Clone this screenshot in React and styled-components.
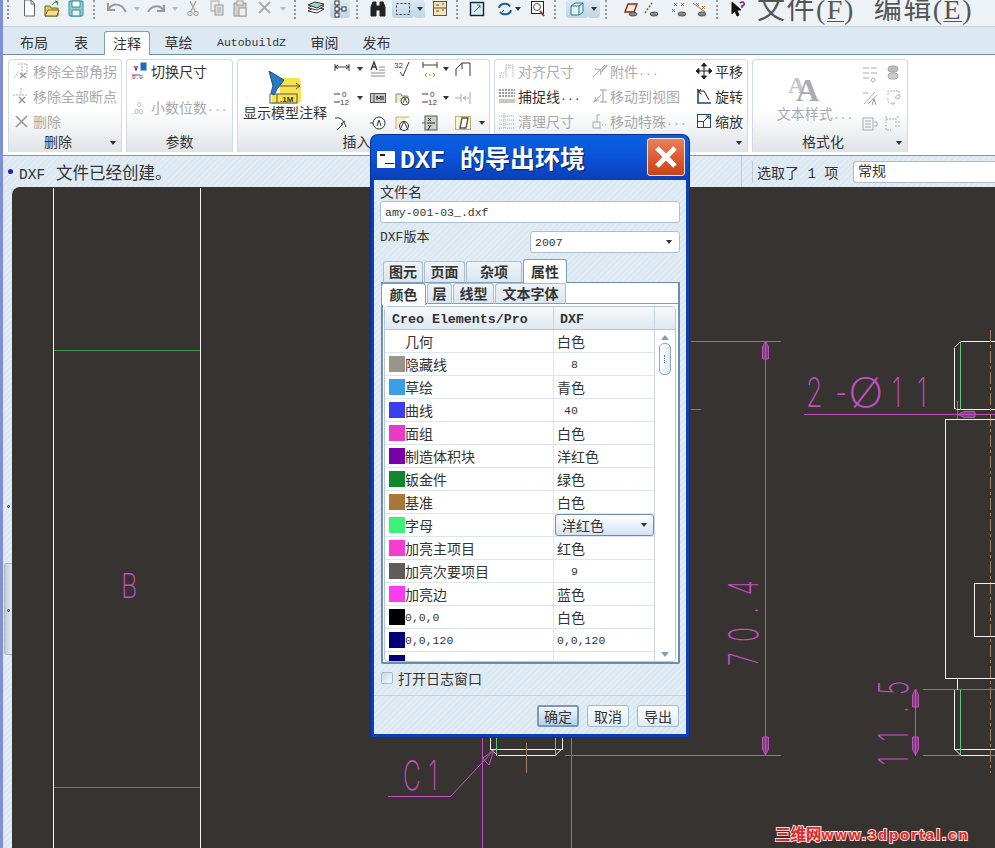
import React from 'react';
import styled, { createGlobalStyle } from 'styled-components';

const Global = createGlobalStyle`
  html, body { margin: 0; padding: 0; background: #363330; }
  * { box-sizing: border-box; }
`;

const stripes = `repeating-linear-gradient(135deg, #dbe8f2 0 2px, #e1ecf5 2px 4px)`;
const cjk = `"Liberation Mono", "Noto Sans CJK SC", monospace`;

const Page = styled.div`
  position: relative;
  width: 995px;
  height: 848px;
  overflow: hidden;
  display: flex;
  flex-direction: column;
  border-left: 3px solid #7f8fd8;
  font-family: ${cjk};
  font-size: 14px;
  color: #333;
`;

/* top toolbar */
const Toolbar = styled.div`
  height: 27px;
  flex: none;
  display: flex;
  align-items: flex-start;
  overflow: hidden;
  background: #edf2f6;
  border-bottom: 1px solid #c4d0da;
`;
const Slot = styled.div`
  width: ${p => p.$w}px;
  height: 18px;
  flex: none;
  display: flex;
  align-items: center;
  justify-content: center;
  ${p => p.$on && `background: linear-gradient(#dbe8f2, #bcd6ea); border-radius: 3px;`}
`;
const Grip = styled.div`
  width: 3px;
  height: 19px;
  border-left: 2px dotted #8c9aa6;
`;
const Menu = styled.div`
  margin-left: 9px;
  display: flex;
  gap: 19px;
  font-family: "Liberation Serif", "Noto Sans CJK SC", serif;
  font-size: 28px;
  line-height: 20px;
  letter-spacing: 1.5px;
  color: #555;
  white-space: nowrap;
  u { text-underline-offset: 2px; text-decoration-thickness: 1px; }
`;
const Arrow = styled.i`
  display: block;
  width: 0;
  height: 0;
  border: 3.5px solid transparent;
  border-top: 4px solid ${p => p.$c || '#333'};
  border-bottom: 0;
`;

/* tabs */
const TabStrip = styled.div`
  height: 28px;
  flex: none;
  display: flex;
  align-items: flex-end;
  background: #dce8f2;
  border-bottom: 1px solid #6d8ca6;
  padding-left: 7px;
`;
const MainTab = styled.div`
  width: ${p => p.$w}px;
  height: ${p => (p.$on ? 24 : 23)}px;
  margin-bottom: ${p => (p.$on ? -1 : 0)}px;
  padding-bottom: 1px;
  display: flex;
  align-items: center;
  justify-content: center;
  white-space: nowrap;
  font-size: ${p => (p.$latin ? 11.5 : 14)}px;
  ${p => p.$on && `background: #fff; border: 1px solid #7f9db5; border-bottom: 0; border-radius: 3px 3px 0 0;`}
`;

/* ribbon */
const Ribbon = styled.div`
  height: 100px;
  flex: none;
  display: flex;
  gap: 4px;
  padding: 4px 0 3px 5px;
  background: #fff;
`;
const Group = styled.div`
  width: ${p => p.$w}px;
  display: flex;
  flex-direction: column;
  border: 1px solid #d0dae2;
  border-bottom: 0;
  border-radius: 4px 4px 0 0;
  background: linear-gradient(#fff 55%, #dfe4e8);
`;
const GroupBody = styled.div`
  height: 75px;
  display: flex;
  flex: none;
`;
const Col = styled.div`
  width: ${p => p.$w ? `${p.$w}px` : 'auto'};
  display: flex;
  flex-direction: column;
`;
const GroupFoot = styled.div`
  position: relative;
  height: 17px;
  padding-right: ${p => p.$pr || 0}px;
  text-align: center;
  line-height: 17px;
  white-space: nowrap;
  & > i { position: absolute; right: 5px; top: 6px; }
`;
const Cmd = styled.div`
  height: 25px;
  padding-bottom: 3px;
  display: flex;
  align-items: center;
  white-space: nowrap;
  color: ${p => (p.$off ? '#aaa' : '#333')};
  margin-top: ${p => p.$mt || 0}px;
`;
const CmdIcon = styled.div`
  width: ${p => p.$w}px;
  flex: none;
  display: flex;
  justify-content: center;
`;
const Dots = styled.span`
  font-size: 11.5px;
`;
const BigCmd = styled.div`
  width: ${p => p.$w}px;
  padding-top: ${p => p.$pt}px;
  padding-left: ${p => p.$pl || 0}px;
  flex: none;
  display: flex;
  flex-direction: column;
  align-items: center;
  white-space: nowrap;
  line-height: 16px;
  color: ${p => (p.$off ? '#aaa' : '#333')};
`;
const BigText = styled.span`
  margin-top: ${p => p.$mt || 0}px;
`;
const IconGrid = styled.div`
  display: grid;
  grid-template-columns: ${p => p.$cols};
  grid-auto-rows: 25px;
  align-items: center;
  justify-items: center;
  & > .lift { margin-bottom: 8px; }
`;

/* status */
const Status = styled.div`
  height: 32px;
  flex: none;
  display: flex;
  align-items: center;
  background: ${stripes};
  border-top: 1px solid #7f9ab0;
  padding-left: 5px;
`;
const Bullet = styled.span`
  width: 5px;
  height: 5px;
  margin-right: 6px;
  border-radius: 50%;
  background: #1a22c0;
`;
const StatusMsg = styled.div`
  flex: 1;
  font-size: 16.5px;
  white-space: pre;
  span { font-size: 14.5px; margin-right: 11px; }
`;
const StatusRight = styled.div`
  width: 254px;
  flex: none;
  height: 100%;
  display: flex;
  align-items: center;
  border-left: 1px solid #bccbd8;
  padding-left: 15px;
  position: relative;
  &::before { content: ''; position: absolute; left: 10px; top: 5px; bottom: 4px; width: 1px; background: #bccbd8; }
  span { white-space: pre; width: 96px; flex: none; }
`;
const StatusField = styled.div`
  flex: 1;
  height: 22px;
  line-height: 20px;
  padding-left: 4px;
  background: #fff;
  border: 1px solid #a9bccb;
  border-right: 0;
  border-radius: 3px 0 0 3px;
`;

/* main */
const Work = styled.div`
  flex: 1;
  display: flex;
  min-height: 0;
  background: #dce8f2;
`;
const Rail = styled.div`
  width: 9px;
  flex: none;
  position: relative;
  background: ${stripes};
`;
const RailDot = styled.i`
  position: absolute;
  left: 4px;
  top: ${p => p.$y}px;
  width: 3px;
  height: 3px;
  border-radius: 50%;
  border: 1px solid #334;
`;
const RailHandle = styled.div`
  position: absolute;
  left: 1px;
  top: 376px;
  right: 0;
  height: 92px;
  border: 1px solid #a9b7c3;
  border-right: 0;
  border-radius: 3px 0 0 3px;
  background: linear-gradient(90deg, #c0ced9, #dfe9f1);
`;
const Canvas = styled.div`
  position: relative;
  flex: 1;
  background: #363330;
  border-radius: 8px 0 0 0;
  overflow: hidden;
`;
const Drawing = styled.svg`
  display: block;
  width: 983px;
  height: 661px;
  line { shape-rendering: crispEdges; }
`;
const Watermark = styled.div`
  position: absolute;
  left: 763px;
  bottom: 5px;
  font-family: "Liberation Sans", "Noto Sans CJK SC", sans-serif;
  font-weight: 700;
  font-size: 15.5px;
  line-height: 16px;
  white-space: nowrap;
  color: #e02828;
  -webkit-text-stroke: 2px #f6d8d8;
  paint-order: stroke fill;
  span { font-size: 15px; letter-spacing: 1.9px; }
`;

/* dialog */
const Dialog = styled.div`
  position: absolute;
  left: 368px;
  top: 135px;
  width: 318px;
  height: 602px;
  display: flex;
  flex-direction: column;
  background: #0b3fb8;
  border: 3px solid #0b3fb8;
  border-top: 0;
  border-radius: 7px 7px 0 0;
  box-shadow: 0 0 0 1px #0a2f90;
`;
const TitleBar = styled.div`
  height: 45px;
  flex: none;
  display: flex;
  align-items: center;
  gap: 5px;
  padding: 0 3px 1px 3px;
  margin: 0 -3px;
  border-radius: 7px 7px 0 0;
  background: linear-gradient(#0a60e0, #0b52d8 50%, #0a3fb8);
  color: #fff;
  font-size: 25px;
  font-weight: 700;
  white-space: pre;
  text-shadow: 1px 1px 1px #06246c;
`;
const TitleIcon = styled.div`
  width: 18px;
  height: 17px;
  margin: 4px 0 0 3px;
  flex: none;
  background: #fff;
  position: relative;
  &::before { content: ''; position: absolute; left: 3px; top: 3px; width: 5px; height: 2px; background: #222; }
  &::after { content: ''; position: absolute; left: 8px; top: 12px; width: 9px; height: 1px; background: #222; }
`;
const CloseBtn = styled.div`
  width: 38px;
  height: 38px;
  margin-left: auto;
  margin-right: 1px;
  flex: none;
  display: flex;
  align-items: center;
  justify-content: center;
  border: 1px solid #f4e4dc;
  border-radius: 3px;
  background: linear-gradient(#ea8060, #de5830 55%, #c84418);
`;
const DialogBody = styled.div`
  flex: 1;
  min-height: 0;
  display: flex;
  flex-direction: column;
  padding: 5px 6px 0;
  background: ${stripes};
`;
const Label = styled.div`
  line-height: 16px;
  white-space: nowrap;
`;
const Field = styled.div`
  height: 22px;
  width: ${p => (p.$w ? `${p.$w}px` : '100%')};
  display: flex;
  align-items: center;
  justify-content: space-between;
  padding: 0 7px 0 4px;
  background: #fff;
  border: 1px solid #a9c0d2;
  border-radius: 3px;
  font-size: 11.5px;
`;
const VersionRow = styled.div`
  display: flex;
  justify-content: space-between;
  margin-top: 8px;
  ${Label} { font-size: 13px; line-height: 14px; }
`;
const OuterTabs = styled.div`
  display: flex;
  align-items: flex-end;
  gap: 1px;
  margin: 6px 0 -1px 3px;
  position: relative;
  z-index: 1;
  height: 24px;
`;
const TabBtn = styled.div`
  width: ${p => p.$w}px;
  height: ${p => p.$h}px;
  padding-bottom: 2px;
  display: flex;
  align-items: center;
  justify-content: center;
  font-weight: 700;
  border: 1px solid #a9bfd0;
  border-bottom: ${p => (p.$on ? 0 : '1px solid #7f9db5')};
  border-radius: 3px 3px 0 0;
  background: ${p => (p.$on ? '#fff' : 'linear-gradient(#eef4f9, #d9e6f0)')};
  ${p => p.$on && 'border-color: #7f9db5;'}
`;
const PropPanel = styled.div`
  width: 299px;
  height: 382px;
  margin-left: 1px;
  flex: none;
  background: #fff;
  border: 2px solid #6b8fab;
  border-top: 1px solid #6b8fab;
  border-radius: 0 0 2px 2px;
  display: flex;
  flex-direction: column;
`;
const InnerTabs = styled.div`
  height: 21px;
  flex: none;
  margin-left: -2px;
  display: flex;
  gap: 1px;
  border-bottom: 1px solid #7f9db5;
`;
const Grid = styled.div`
  height: 357px;
  margin: 2px 2px 0 1px;
  display: flex;
  flex-direction: column;
  border: 1px solid #b4c7d6;
  border-radius: 4px;
  overflow: hidden;
`;
const GridHead = styled.div`
  height: 23px;
  flex: none;
  display: grid;
  grid-template-columns: 169px 101px 1fr;
  background: linear-gradient(#f6f9fb, #dfe9f1);
  border-bottom: 1px solid #b4c7d6;
  font-size: 13.3px;
  font-weight: 700;
  & > div { display: flex; align-items: center; padding: 2px 0 0 7px; border-right: 1px solid #c9d7e2; }
  & > div:nth-child(2) { padding-left: 6px; }
  & > div:last-child { border-right: 0; }
`;
const GridBody = styled.div`
  flex: 1;
  min-height: 0;
  display: flex;
`;
const Rows = styled.div`
  width: 270px;
  flex: none;
  overflow: hidden;
  border-right: 1px solid #c9d7e2;
`;
const Row = styled.div`
  height: 23px;
  display: grid;
  grid-template-columns: 169px 100px;
  border-bottom: 1px solid #dbe6ee;
`;
const NameCell = styled.div`
  display: flex;
  align-items: center;
  padding-left: 4px;
  border-right: 1px solid #dbe6ee;
  white-space: nowrap;
  font-size: ${p => (p.$num ? 11.5 : 14)}px;
`;
const Swatch = styled.i`
  width: 16px;
  height: 16px;
  flex: none;
  background: ${p => p.$c || 'transparent'};
`;
const ValueCell = styled.div`
  display: flex;
  align-items: center;
  padding-left: ${p => p.$pad || 3}px;
  white-space: nowrap;
  font-size: ${p => (p.$num ? 11.5 : 14)}px;
`;
const Combo = styled.div`
  width: 99px;
  height: 22px;
  padding: 0 6px;
  display: flex;
  align-items: center;
  justify-content: space-between;
  border: 1px solid #6b8fab;
  border-radius: 3px;
  background: linear-gradient(#fff, #d2e3f1);
  font-size: 14px;
`;
const Scroll = styled.div`
  flex: 1;
  position: relative;
  display: flex;
  flex-direction: column;
  align-items: center;
  padding-top: 5px;
  background: #fff;
`;
const ScrollUp = styled.i`
  width: 0;
  height: 0;
  border: 4px solid transparent;
  border-bottom: 5px solid #7f9db5;
  border-top: 0;
`;
const ScrollDown = styled(ScrollUp)`
  position: absolute;
  bottom: 4px;
  transform: rotate(180deg);
`;
const Thumb = styled.div`
  width: 12px;
  height: 32px;
  margin-top: 3px;
  border: 1px solid #8aa8c0;
  border-radius: 5px;
  background: linear-gradient(90deg, #fff, #dbe8f2);
  display: flex;
  align-items: center;
  justify-content: center;
  &::after { content: ''; width: 2px; height: 8px; border-left: 1px dotted #5f7f99; }
`;
const CheckRow = styled.div`
  display: flex;
  align-items: center;
  gap: 5px;
  height: 16px;
  margin: 6px 0 0 1px;
`;
const Check = styled.i`
  width: 12px;
  height: 12px;
  border: 1px solid #a9bccb;
  border-radius: 2px;
  background: linear-gradient(135deg, #c8d8e4, #f6fafc);
`;
const Footer = styled.div`
  margin: auto -6px 0;
  padding: 9px 7px 0 0;
  height: 39px;
  display: flex;
  justify-content: flex-end;
  gap: 8px;
  border-top: 1px solid #c4d3df;
`;
const Btn = styled.div`
  width: 42px;
  height: 22px;
  display: flex;
  align-items: center;
  justify-content: center;
  border: ${p => (p.$on ? '2px solid #7c98ae' : '1px solid #a3b9ca')};
  border-radius: 3px;
  background: ${p => (p.$on ? 'linear-gradient(#f0f6fb, #b4d2ea)' : 'linear-gradient(#fbfdfe, #e2ecf4)')};
`;

const Ic = ({ s = 16, vb = 16, children, className }) => (
  <svg width={s} height={s} viewBox={`0 0 ${vb} ${vb}`} className={className} fill="none" stroke="#444" strokeWidth="1" style={{ display: 'block', overflow: 'visible' }}>{children}</svg>
);

const G = '#b0b0b0';
const D = '#3a3a3a';
const tiny = { fontFamily: '"Liberation Sans", sans-serif', fontSize: 8, stroke: 'none' };

const bar = {
  new: <><path d="M3.5-1H10l3.500 4v12h-10z" fill="#fff" stroke="#666" /><path d="M10-1v4h3.500" stroke="#666" /></>,
  open: <><path d="M1 5h5l1 2h7v8H1z" fill="#e8c860" stroke="#7a6420" /><path d="M1 15l3-6h11l-2 6z" fill="#f6e090" stroke="#7a6420" /><path d="M8 4Q10 0 14 1M14 1l-3-1M14 1l-1 3" stroke="#3a7a20" /></>,
  save: <><rect x="1" y="0" width="14" height="15" rx="1" fill="#8fd0d8" stroke="#3a8a98" /><rect x="4" y="0" width="8" height="6" fill="#fff" stroke="#3a8a98" /><rect x="4" y="9" width="8" height="6" fill="#e8f4f4" stroke="#3a8a98" /></>,
  undo: <path d="M-1 2v7h7M-1 9C3 2 12 1 17 11" stroke="#999" strokeWidth="2" />,
  redo: <path d="M16 4v6H9M16 10C12 3 4 4 0 11" stroke="#999" strokeWidth="2" />,
  cut: <><path d="M5 0l5 10M11 0L6 10" stroke="#aaa" strokeWidth="1.5" /><circle cx="5" cy="12.5" r="2.2" stroke="#999" /><circle cx="11" cy="12.5" r="2.2" stroke="#999" /></>,
  copy: <><rect x="2" y="0" width="8" height="10" fill="#eee" stroke="#aaa" /><rect x="6" y="4" width="8" height="10" fill="#ddd" stroke="#999" /><path d="M8 7h4M8 9h4M8 11h4" stroke="#aaa" /></>,
  paste: <><rect x="2" y="2" width="12" height="13" fill="#cfcfc8" stroke="#999" /><rect x="5" y="0" width="6" height="4" fill="#eee" stroke="#999" /><rect x="7" y="7" width="7" height="8" fill="#eee" stroke="#999" /></>,
  del: <path d="M2 1l11 11M13 1L2 12" stroke="#aaa" strokeWidth="2" />,
  layers: <><path d="M0 10l7-4 9 2-7 4z" fill="#fff" stroke="#333" /><path d="M0 7l7-4 9 2-7 4z" fill="#fff" stroke="#333" /><path d="M0 4l7-3 9 2-7 4z" fill="#9fd8b8" stroke="#333" /></>,
  tree: <><rect x="3" y="0" width="4" height="4" fill="#fff" stroke="#333" /><rect x="3" y="6" width="4" height="4" fill="#fff" stroke="#333" /><rect x="3" y="12" width="4" height="4" fill="#fff" stroke="#333" /><rect x="10" y="6" width="4" height="4" fill="#fff" stroke="#333" /><path d="M5 4v2M5 10v2M7 8h3" stroke="#333" /></>,
  binoc: <path d="M1 15V6l2-5h3v14zM15 15V6l-2-5h-3v14zM6 5h4v4H6z" fill="#222" stroke="#222" />,
  sel: <rect x="1.5" y="2.5" width="13" height="11" stroke="#223" strokeDasharray="2 2" />,
  qm: <><rect x="1.5" y="0.5" width="13" height="14" fill="#f0e8b0" stroke="#555" /><path d="M4 4h3M4 10h3M10 3h2M10 9h2" stroke="#a03030" /><path d="M1.5 7h13" stroke="#555" /></>,
  sheet: <><rect x="1.5" y="1.5" width="13" height="13" fill="#d8ecf4" stroke="#123" strokeWidth="1.4" /><path d="M5 11l6-6M8 4h3v3" stroke="#3080b0" /></>,
  regen: <><path d="M2 7a6 5 0 0 1 11-2M14 9a6 5 0 0 1-11 2" stroke="#1060a0" strokeWidth="2" /><path d="M5 11l2-2M11 4l2 2" stroke="#c03030" /></>,
  zoom: <><rect x="1.5" y="0.5" width="12" height="12" fill="#fff" stroke="#222" /><circle cx="7" cy="6" r="3.5" stroke="#555" /><path d="M10 10l4 5" stroke="#a83020" strokeWidth="2" /></>,
  cube: <><path d="M2 5l4-3h8v9l-4 3H2z" fill="#dff2f2" stroke="#2a7a88" /><path d="M2 5h8v9M10 5l4-3" stroke="#2a7a88" /></>,
  eye1: <><path d="M3 11L6 3h9l-3 8z" fill="#f4ecd0" stroke="#8a2a18" strokeWidth="1.4" /><ellipse cx="11" cy="13" rx="4" ry="2" fill="#888" stroke="#555" /></>,
  eye2: <><path d="M2 12L9 2" stroke="#8a5a18" strokeWidth="1.4" strokeDasharray="2 1.5" /><ellipse cx="11" cy="13" rx="4" ry="2" fill="#888" stroke="#555" /></>,
  eye3: <><path d="M3 2l3 3M6 2L3 5M10 2l3 3M13 2l-3 3M1 8l3 3M4 8l-3 3" stroke="#b05020" /><ellipse cx="11" cy="13" rx="4" ry="2" fill="#888" stroke="#555" /></>,
  eye4: <><path d="M2 2l12 9M5 2l3 3M8 2L5 5M11 5l3 3M14 5l-3 3" stroke="#b07040" /><ellipse cx="11" cy="13" rx="4" ry="2" fill="#888" stroke="#555" /></>,
  help: <><path d="M2 1l0 12 3-3 2 5 2-1-2-5h4z" fill="#111" stroke="#111" /><path d="M10 2q3-2 4 0t-2 3v2" stroke="#8a1a90" strokeWidth="1.6" /></>,
};

const toolbarItems = [
  [11, 'grip'], [4], [22, 'new'], [24, 'open'], [24, 'save'], [12, 'grip'], [6], [22, 'undo'], [18, 'ddg'], [20, 'redo'], [18, 'ddg'],
  [18, 'cut'], [4], [22, 'copy'], [24, 'paste'], [26, 'del'], [10, 'ddg'], [14, 'grip'], [3], [22, 'layers'], [3], [20, 'tree', 1],
  [14, 'grip'], [28, 'binoc'], [22, 'sel', 1], [11, 'dd', 1], [30, 'qm'], [4, 'grip'], [36, 'sheet'], [20, 'regen'], [6, 'dd'], [7], [20, 'zoom'],
  [14, 'grip'], [4], [22, 'cube', 1], [12, 'dd', 1], [12, 'grip'], [8], [20, 'eye1'], [22, 'eye2'], [6], [22, 'eye3'], [18, 'eye4'], [3], [12, 'grip'], [5], [20, 'help'],
];

const rib = {
  corner: <><path d="M5 1h9v10M9 3v10M1 15l5-7" stroke={G} strokeDasharray="2 1" /><path d="M7 10l6 5M13 10l-6 5" stroke="#999" strokeWidth="1.6" /></>,
  brk: <><path d="M0 7h15M8 0v7" stroke={G} strokeDasharray="2 1" /><path d="M6 9l6 6M12 9l-6 6" stroke="#999" strokeWidth="1.6" /></>,
  x: <path d="M3 3l11 11M14 3L3 14" stroke="#999" strokeWidth="1.6" />,
  sw: <><rect x="10" y="0" width="5" height="7" fill="#1a6ac0" stroke="#1a6ac0" /><path d="M1 12h8M3 3l2 4 2-4" stroke="#a02890" /><path d="M5 3v5" stroke={D} /><text x="1" y="16" fontSize="6" fill={D} stroke="none">0.0</text></>,
  dec: <><text x="1" y="15" style={tiny} fill="#aaa">.00</text><text x="6" y="8" style={tiny} fill="#aaa">0</text></>,
  dim: <path d="M1 3v7M15 3v7M1 6h14M1 6l3-2M1 6l3 2M15 6l-3-2M15 6l-3 2" stroke={D} />,
  az: <><path d="M1 9l3-8 3 8M2 6h4" stroke={D} strokeWidth="1.4" /><path d="M9 6h6M9 9h6M1 12h14M1 15h14" stroke="#888" /></>,
  cs: <><text x="-1" y="7" style={tiny} fill={D}>32</text><path d="M5 11l3 4 6-14" stroke={D} /></>,
  dimx: <><path d="M1 1v6M15 1v6M1 4h14" stroke={D} /><path d="M5 12l-2 2 2 2M11 12l2 2-2 2M7 14h2" stroke="#b09020" /></>,
  jog: <path d="M1 15V8l6-6M7 2h8v13M7 2v6" stroke={D} />,
  tol: <><path d="M0 4h6M0 12h6" stroke={D} /><text x="8" y="7" style={tiny} fill={D}>0</text><text x="6" y="15" style={tiny} fill={D}>12</text></>,
  box1: <><rect x="0.5" y="3.5" width="15" height="9" fill="#c8c8c0" stroke="#555" /><path d="M4 3v9" stroke="#555" /><path d="M7 10V6l2 3 2-3v4M13 6v4" stroke="#222" /></>,
  fold: <><path d="M1 13V4h5l1 2h6v3" fill="#f6ecc4" stroke="#888" /><circle cx="10" cy="11" r="4" fill="#fff" stroke="#444" /><path d="M8 13l2-5 2 5" stroke="#444" /></>,
  grey: <path d="M0 8h6M6 4v8M15 2v12M8 8h6M8 8l3-2M8 8l3 2" stroke="#aaa" />,
  arc: <><path d="M1 3q8-2 11 9" stroke={D} /><path d="M3 15l6-6-2 0 4-3" stroke={D} /></>,
  circA: <><path d="M0 8h3" stroke={D} /><circle cx="9" cy="8" r="6" stroke={D} /><path d="M7 11l2-6 2 6" stroke={D} /></>,
  boxA: <><path d="M1 14V2h13" stroke="#c8b060" fill="#f4f0dc" /><path d="M5 15l4-9 4 9" stroke="#333" /><circle cx="9" cy="11" r="4.5" stroke="#333" /></>,
  xy: <><rect x="3" y="1" width="12" height="14" fill="#d0d0c4" stroke="#555" /><path d="M6 3l3 3M9 3L6 6M5 8h8M6 10l2 2M9 10l-3 5" stroke="#222" /><path d="M0 8h3" stroke="#555" /></>,
  para: <><rect x="0.5" y="1.5" width="15" height="13" fill="#fbf6d0" stroke="#c0b070" /><path d="M5 13l2-10h6l-2 10z" fill="#fff" stroke="#555" strokeWidth="1.4" /></>,
  align: <path d="M1 15v-5h6v5M4 12v3M7 2h7v13M7 2v8M10 2v3M7 5h7" stroke="#aaa" strokeDasharray="1 1" />,
  snap: <><path d="M0 2h16M0 5h16M0 8h16" stroke={D} strokeDasharray="2 1" /><rect x="0" y="11" width="16" height="4" fill="#c8c8bc" stroke="none" /></>,
  clean: <path d="M0 3h16M0 7h16M0 11h16M0 15h16M5 0v16" stroke="#aaa" strokeDasharray="1 1" />,
  att: <><path d="M1 14L13 2M3 6l5 1 1 5" stroke="#aaa" /><path d="M9 9l6-7" stroke="#bbb" strokeWidth="2" /></>,
  toview: <><path d="M2 14l7-7M2 14l2-5M2 14l5-2" stroke="#aaa" /><path d="M8 2h7M11 2v12M8 14h7" stroke="#999" /></>,
  special: <><rect x="1" y="9" width="7" height="6" stroke="#aaa" /><path d="M5 9V2h3M10 12h1M13 12h1" stroke="#aaa" /></>,
  move: <path d="M8 0v16M0 8h16M8 0L5.500 3h5zM8 16l-2.500-3h5zM0 8l3-2.500v5zM16 8l-3-2.500v5z" fill="#222" stroke="#222" />,
  rot: <><path d="M2 1v14h13" stroke="#1a4a80" strokeWidth="1.6" /><path d="M2 3l6 0 5 9M5 1L2.500 4l3 2" stroke="#222" /></>,
  scale: <><rect x="1.5" y="1.5" width="13" height="13" fill="#fff" stroke="#1a4a80" /><rect x="1.5" y="8.500" width="6" height="6" stroke="#1a4a80" /><path d="M8 8l5-5M10 3h3v3" stroke="#222" /></>,
  f1: <path d="M1 3h6M9 3h6M1 8h6M9 8h6M1 13h6M11 13a2 2 0 1 0 .1 0" stroke="#aaa" />,
  f2: <><rect x="3" y="1" width="10" height="6" rx="3" fill="#bbb" stroke="#aaa" /><rect x="3" y="8" width="10" height="6" rx="3" fill="#ccc" stroke="#aaa" /></>,
  f3: <><path d="M2 14L13 2M6 14L15 5" stroke="#aaa" /><path d="M1 3h5" stroke="#aaa" /><path d="M10 15l2-6 2 6" stroke="#999" /></>,
  f4: <path d="M3 5V1h11v4M14 8l-3 2M3 8v3a2 2 0 0 0 2 2h6M8 15v-3M12 5h3v3h-5z" stroke="#aaa" strokeDasharray="2 1" />,
  f5: <path d="M1 3h10v12H1zM3 6h6M3 9h6M3 12h6M12 7h3v4h-3" stroke="#aaa" />,
  f6: <path d="M1 1v7M13 1v3M1 4h12M1 10v5h5M10 7h5M10 11h5" stroke="#aaa" strokeDasharray="2 1" />,
};

const Cmds = ({ items, w }) => items.map(([key, text, off]) => (
  <Cmd key={text} $off={off}>
    <CmdIcon $w={w}><Ic>{rib[key]}</Ic></CmdIcon>{text}
  </Cmd>
));

const insertGrid = [
  ['dim', 1], ['a'], ['az', 1], ['cs', 1], ['dimx', 1], ['a'], ['jog', 1], null,
  ['tol'], ['a'], ['box1'], ['fold'], ['tol'], ['a'], ['grey'], null,
  ['arc'], null, ['circA'], ['boxA'], ['xy'], null, ['para'], ['a'],
];

const rows = [
  { n: '几何', v: '白色' },
  { n: '隐藏线', c: '#9b9488', v: '8', pad: 17, num: 1 },
  { n: '草绘', c: '#3a9ee8', v: '青色' },
  { n: '曲线', c: '#3c3cf0', v: '40', pad: 10, num: 1 },
  { n: '面组', c: '#e83cc8', v: '白色' },
  { n: '制造体积块', c: '#7a00a8', v: '洋红色' },
  { n: '钣金件', c: '#108830', v: '绿色' },
  { n: '基准', c: '#a87838', v: '白色' },
  { n: '字母', c: '#3cf078', combo: '洋红色' },
  { n: '加亮主项目', c: '#f83cd0', v: '红色' },
  { n: '加亮次要项目', c: '#605c58', v: '9', pad: 17, num: 1 },
  { n: '加亮边', c: '#f83cf0', v: '蓝色' },
  { n: '0,0,0', c: '#000', v: '白色', nn: 1 },
  { n: '0,0,120', c: '#000078', v: '0,0,120', num: 1, nn: 1 },
  { n: '', c: '#000078', v: '' },
];

const M = '#c24fc2';
const W = '#f2f2f2';
const GR = '#5fc87a';
const GD = '#3a9a50';
const BR = '#a5805a';

// lines given in page coordinates: x1 y1 x2 y2
const magenta = [
  [690, 341, 780, 341], [765, 341, 765, 755], [564, 755, 780, 755], [690, 409, 700, 409],
  [803, 414, 995, 414], [957, 400, 957, 419], [922, 689, 995, 689], [922, 755, 995, 755],
  [915, 689, 915, 755], [482, 737, 482, 848], [571, 737, 571, 848], [387, 796, 450, 796],
];
const white = [
  [53, 187, 53, 848], [200, 187, 200, 848],
  [954, 347, 954, 408], [960, 341, 995, 341], [956, 409, 995, 409],
  [957, 678, 957, 689], [954, 689, 954, 749], [954, 749, 995, 749], [960, 755, 990, 755],
  [490, 737, 490, 749], [490, 749, 562, 749], [562, 737, 562, 749], [497, 755, 555, 755],
];
const green = [
  [960, 341, 960, 409], [960, 689, 960, 755], [496, 737, 496, 755], [555, 737, 555, 755],
];
const cadFont = { fontFamily: 'Inter, Roboto, sans-serif', fontWeight: 200, fill: M };

const arrowV = (x, y, dir) => `M${x} ${y}l-3 ${dir * 6}v${dir * 12}h6v${dir * -12}z`;

const Seg = ({ d, c }) => <line x1={d[0] + 0.5} y1={d[1] + 0.5} x2={d[2] + 0.5} y2={d[3] + 0.5} stroke={c} />;

export default function App() {
  return (
    <Page>
      <Global />
      <Toolbar>
        {toolbarItems.map(([w, key, on], i) => (
          <Slot key={i} $w={w} $on={on}>
            {key === 'grip' && <Grip />}
            {key === 'dd' && <Arrow />}
            {key === 'ddg' && <Arrow $c="#bbb" />}
            {bar[key] && <Ic>{bar[key]}</Ic>}
          </Slot>
        ))}
        <Menu>
          <span>文件(<u>F</u>)</span>
          <span>编辑(<u>E</u>)</span>
        </Menu>
      </Toolbar>

      <TabStrip>
        <MainTab $w={48}>布局</MainTab>
        <MainTab $w={46}>表</MainTab>
        <MainTab $w={46} $on>注释</MainTab>
        <MainTab $w={57}>草绘</MainTab>
        <MainTab $w={89} $latin>AutobuildZ</MainTab>
        <MainTab $w={57}>审阅</MainTab>
        <MainTab $w={47}>发布</MainTab>
      </TabStrip>

      <Ribbon>
        <Group $w={114}>
          <GroupBody>
            <Col>
              <Cmds w={24} items={[['corner', '移除全部角拐', 1], ['brk', '移除全部断点', 1], ['x', '删除', 1]]} />
            </Col>
          </GroupBody>
          <GroupFoot $pr={14}>删除<Arrow /></GroupFoot>
        </Group>
        <Group $w={107}>
          <GroupBody>
            <Col>
              <Cmd><CmdIcon $w={24}><Ic>{rib.sw}</Ic></CmdIcon>切换尺寸</Cmd>
              <Cmd $off $mt={11}><CmdIcon $w={24}><Ic>{rib.dec}</Ic></CmdIcon>小数位数<Dots>...</Dots></Cmd>
            </Col>
          </GroupBody>
          <GroupFoot>参数</GroupFoot>
        </Group>
        <Group $w={253}>
          <GroupBody>
            <BigCmd $w={94} $pt={11}>
              <svg width="34" height="34" viewBox="0 0 34 34" style={{ display: 'block' }}>
                <path d="M12 7h19l2 4v19l-3 3H4V23h8z" fill="#f5e24c" />
                <path d="M1 0l15 9-7 9-3 6-3-2 2-7z" fill="#2a7ac0" stroke="#14508a" />
                <path d="M10 15h22M28 12l4 3-4 3" fill="none" stroke="#555" />
                <rect x="2" y="23" width="27" height="9" fill="none" stroke="#555" />
                <path d="M9 23v9" stroke="#555" />
                <text x="12" y="31" fontSize="8" fontFamily="Liberation Sans, sans-serif" fontWeight="700" fill="#333">.1M</text>
              </svg>
              <BigText $mt={1}>显示模型注释</BigText>
            </BigCmd>
            <IconGrid $cols="20px 16px 20px 30px 24px 8px 26px 12px">
              {insertGrid.map((c, i) => {
                if (!c) return <span key={i} />;
                if (c[0] === 'a') return <Arrow key={i} className={i < 8 ? 'lift' : ''} />;
                return <Ic key={i} className={c[1] ? 'lift' : ''}>{rib[c[0]]}</Ic>;
              })}
            </IconGrid>
          </GroupBody>
          <GroupFoot $pr={14}>插入</GroupFoot>
        </Group>
        <Group $w={254}>
          <GroupBody>
            <Col $w={95}>
              <Cmd $off><CmdIcon $w={23}><Ic>{rib.align}</Ic></CmdIcon>对齐尺寸</Cmd>
              <Cmd><CmdIcon $w={23}><Ic>{rib.snap}</Ic></CmdIcon>捕捉线<Dots>...</Dots></Cmd>
              <Cmd $off><CmdIcon $w={23}><Ic>{rib.clean}</Ic></CmdIcon>清理尺寸</Cmd>
            </Col>
            <Col $w={102}>
              <Cmd $off><CmdIcon $w={20}><Ic>{rib.att}</Ic></CmdIcon>附件<Dots>...</Dots></Cmd>
              <Cmd $off><CmdIcon $w={20}><Ic>{rib.toview}</Ic></CmdIcon>移动到视图</Cmd>
              <Cmd $off><CmdIcon $w={20}><Ic>{rib.special}</Ic></CmdIcon>移动特殊<Dots>...</Dots></Cmd>
            </Col>
            <Col>
              <Cmds w={23} items={[['move', '平移'], ['rot', '旋转'], ['scale', '缩放']]} />
            </Col>
          </GroupBody>
          <GroupFoot><Arrow /></GroupFoot>
        </Group>
        <Group $w={156}>
          <GroupBody>
            <BigCmd $w={106} $pt={13} $pl={18} $off>
              <svg width="34" height="29" viewBox="0 2 34 29" style={{ display: 'block', marginRight: 20 }}>
                <text x="0" y="22" fontSize="24" fontFamily="Liberation Serif, serif" fontWeight="700" fill="#c4c8cc">A</text>
                <text x="8" y="30" fontSize="32" fontFamily="Liberation Serif, serif" fontWeight="700" fill="#a8adb2">A</text>
              </svg>
              <BigText $mt={5}>文本样式<Dots>...</Dots></BigText>
            </BigCmd>
            <IconGrid $cols="22px 23px">
              <Ic>{rib.f1}</Ic><Ic>{rib.f2}</Ic>
              <Ic>{rib.f3}</Ic><Ic>{rib.f4}</Ic>
              <Ic>{rib.f5}</Ic><Ic>{rib.f6}</Ic>
            </IconGrid>
          </GroupBody>
          <GroupFoot $pr={14}>格式化<Arrow /></GroupFoot>
        </Group>
      </Ribbon>

      <Status>
        <Bullet />
        <StatusMsg><span>DXF</span>文件已经创建。</StatusMsg>
        <StatusRight>
          <span>选取了 1 项</span>
          <StatusField>常规</StatusField>
        </StatusRight>
      </Status>

      <Work>
        <Rail>
          <RailDot $y={318} />
          <RailHandle />
          <RailDot $y={422} />
        </Rail>
        <Canvas>
          <Drawing viewBox="12 187 983 661">
            <line x1="53.5" y1="350.5" x2="200.5" y2="350.5" stroke={GD} />
            <line x1="53.5" y1="787.5" x2="200.5" y2="787.5" stroke={GD} />
            {magenta.map((d, i) => <Seg key={i} d={d} c={M} />)}
            {white.map((d, i) => <Seg key={i} d={d} c={W} />)}
            {green.map((d, i) => <Seg key={i} d={d} c={GR} />)}
            <line x1="990.5" y1="330" x2="990.5" y2="773" stroke={BR} strokeDasharray="12 3 3 3" />
            <line x1="526.5" y1="743" x2="526.5" y2="773" stroke={BR} />
            <path d="M954.500 347.500l6-6M954.500 408l2 1.500M954.500 749l6 6M490.500 749l6.500 6M562 749l-6.500 6" fill="none" stroke={W} />
            <path d="M450.500 796.500L494 750" fill="none" stroke={M} />
            <path d="M494 750l-11 8 3 4 3 3z" fill="none" stroke={M} />
            <path d={arrowV(765.5, 341, 1)} fill={M} fillOpacity=".5" stroke={M} />
            <path d={arrowV(765.5, 755, -1)} fill={M} fillOpacity=".5" stroke={M} />
            <path d={arrowV(915.5, 689, 1)} fill={M} fillOpacity=".5" stroke={M} />
            <path d={arrowV(915.5, 755, -1)} fill={M} fillOpacity=".5" stroke={M} />
            <path d="M958 414.500l6-3h11v6h-11z" fill={M} fillOpacity=".5" stroke={M} />
            <rect x="974.500" y="583.500" width="30" height="53" fill="none" stroke={W} />
            <rect x="945.500" y="419.500" width="60" height="259" fill="none" stroke={W} />

            <text transform="translate(121 598) scale(.75 1)" fontSize="34" style={cadFont}>B</text>
            <text transform="translate(403 790) scale(.6 1)" x="0 42" fontSize="41" style={cadFont}>C1</text>
            <text transform="translate(758 666) rotate(-90) scale(.6 1)" x="0 40 87 118" fontSize="41" style={cadFont}>70.4</text>
            <text transform="translate(806 407) scale(.65 1)" x="0 45" fontSize="41" style={cadFont}>2-</text>
            <text transform="translate(848 407) scale(1.15 1)" fontSize="41" style={cadFont}>Ø</text>
            <text transform="translate(892 407) scale(.6 1)" x="0 42" fontSize="41" style={cadFont}>11</text>
            <text transform="translate(908 758) rotate(-90) scale(.6 1)" x="-12 28 75 105" fontSize="41" style={cadFont}>11.5</text>
          </Drawing>
          <Watermark>三维网<span>www.3dportal.cn</span></Watermark>
        </Canvas>
      </Work>

      <Dialog>
        <TitleBar>
          <TitleIcon />
          <span>DXF 的导出环境</span>
          <CloseBtn>
            <svg width="26" height="26" viewBox="0 0 26 26"><path d="M4 4l18 18M22 4L4 22" stroke="#fff" strokeWidth="5" /></svg>
          </CloseBtn>
        </TitleBar>
        <DialogBody>
          <Label>文件名</Label>
          <Field>amy-001-03_.dxf</Field>
          <VersionRow>
            <Label>DXF版本</Label>
            <Field $w={150}>2007<Arrow /></Field>
          </VersionRow>
          <OuterTabs>
            <TabBtn $w={40} $h={22}>图元</TabBtn>
            <TabBtn $w={41} $h={22}>页面</TabBtn>
            <TabBtn $w={56} $h={22}>杂项</TabBtn>
            <TabBtn $w={44} $h={24} $on>属性</TabBtn>
          </OuterTabs>
          <PropPanel>
            <InnerTabs>
              <TabBtn $w={45} $h={22} $on>颜色</TabBtn>
              <TabBtn $w={25} $h={21}>层</TabBtn>
              <TabBtn $w={41} $h={21}>线型</TabBtn>
              <TabBtn $w={71} $h={21}>文本字体</TabBtn>
            </InnerTabs>
            <Grid>
              <GridHead>
                <div>Creo Elements/Pro</div>
                <div>DXF</div>
                <div />
              </GridHead>
              <GridBody>
                <Rows>
                  {rows.map((r, i) => (
                    <Row key={i}>
                      <NameCell $num={r.nn}><Swatch $c={r.c} />{r.n}</NameCell>
                      {r.combo
                        ? <ValueCell $pad={1}><Combo>{r.combo}<Arrow /></Combo></ValueCell>
                        : <ValueCell $pad={r.pad} $num={r.num}>{r.v}</ValueCell>}
                    </Row>
                  ))}
                </Rows>
                <Scroll>
                  <ScrollUp />
                  <Thumb />
                  <ScrollDown />
                </Scroll>
              </GridBody>
            </Grid>
          </PropPanel>
          <CheckRow><Check />打开日志窗口</CheckRow>
          <Footer>
            <Btn $on>确定</Btn>
            <Btn>取消</Btn>
            <Btn>导出</Btn>
          </Footer>
        </DialogBody>
      </Dialog>
    </Page>
  );
}
